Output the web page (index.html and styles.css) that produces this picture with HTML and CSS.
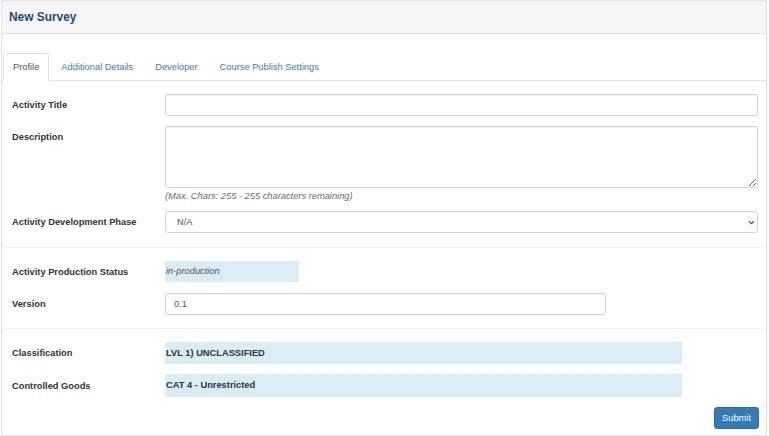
FILE: index.html
```html
<!DOCTYPE html>
<html>
<head>
<meta charset="utf-8">
<title>New Survey</title>
<link rel="stylesheet" href="styles.css">
</head>
<body>
<div class="panel">
  <div class="panel-heading"><h3 class="panel-title">New Survey</h3></div>
  <div class="panel-body">
    <ul class="tabs">
      <li class="tab active">Profile</li>
      <li class="tab">Additional Details</li>
      <li class="tab">Developer</li>
      <li class="tab">Course Publish Settings</li>
    </ul>
    <form class="form">
      <div class="row">
        <label class="label">Activity Title</label>
        <div class="ctl"><input class="input" type="text"></div>
      </div>
      <div class="row row-desc">
        <label class="label label-top">Description</label>
        <div class="ctl">
          <textarea class="input textarea"></textarea>
          <div class="help">(Max. Chars: 255 - 255 characters remaining)</div>
        </div>
      </div>
      <div class="row">
        <label class="label">Activity Development Phase</label>
        <div class="ctl">
          <div class="select-wrap">
            <select class="input select"><option>N/A</option></select>
            <svg class="chev" width="7" height="5" viewBox="0 0 7 5"><path d="M1 1.2 L3.5 3.6 L6 1.2" fill="none" stroke="#555" stroke-width="1.2"/></svg>
          </div>
        </div>
      </div>
      <div class="sep"></div>
      <div class="row row-status">
        <label class="label">Activity Production Status</label>
        <div class="ctl"><div class="static static-status">in-production</div></div>
      </div>
      <div class="row">
        <label class="label">Version</label>
        <div class="ctl"><input class="input input-version" type="text" value="0.1"></div>
      </div>
      <div class="sep sep2"></div>
      <div class="row">
        <label class="label">Classification</label>
        <div class="ctl"><div class="static static-bold">LVL 1) UNCLASSIFIED</div></div>
      </div>
      <div class="row">
        <label class="label">Controlled Goods</label>
        <div class="ctl"><div class="static static-bold static-tall">CAT 4 - Unrestricted</div></div>
      </div>
      <div class="actions"><button class="btn" type="button">Submit</button></div>
    </form>
  </div>
</div>
</body>
</html>
```

FILE: styles.css
```css
* { box-sizing: border-box; }
html, body { margin: 0; padding: 0; background: #fff; }
body {
  font-family: "Liberation Sans", Arial, sans-serif;
  font-size: 9.3px;
  color: #333;
}
.panel {
  margin-left: 1px;
  width: 766px;
  height: 436px;
  border: 1px solid #e3e3e3;
  border-right-color: #dcdcdc;
}
.panel-heading {
  height: 33px;
  background: #f6f6f6;
  border-bottom: 1px solid #e3e3e3;
  display: flex;
  align-items: center;
  padding-left: 7px;
}
.panel-title {
  margin: 0;
  font-size: 11.9px;
  font-weight: bold;
  color: #1b4a7a;
}
.panel-body {
  padding-top: 19px;
}
.tabs {
  list-style: none;
  margin: 0;
  padding: 0 0 0 1px;
  display: flex;
  border-bottom: 1px solid #e3e3e3;
  height: 28px;
}
.tab {
  height: 28px;
  padding: 0 9px;
  margin-right: 2px;
  display: flex;
  align-items: center;
  color: #3a7bb5;
  border: 1px solid transparent;
  border-radius: 3px 3px 0 0;
}
.tab.active {
  color: #555;
  background: #fff;
  border-color: #e3e3e3;
  border-bottom-color: #fff;
}
.form {
  padding: 13px 7px 0 10px;
}
.row {
  display: flex;
  align-items: center;
  margin-bottom: 10px;
}
.row-desc { align-items: flex-start; margin-bottom: 0; }
.row-status { margin-bottom: 11px; }
.label {
  width: 153px;
  flex: none;
  font-weight: bold;
  color: #333;
}
.label-top { padding-top: 6px; }
.ctl { flex: 1; }
.input {
  display: block;
  width: 593px;
  height: 22px;
  margin: 0;
  border: 1px solid #d3d3d3;
  border-radius: 3px;
  font-family: "Liberation Sans", Arial, sans-serif;
  font-size: 9.3px;
  color: #555;
  padding: 0 8px;
  background: #fff;
  box-shadow: inset 0 1px 1px rgba(0,0,0,0.04);
}
.textarea {
  height: 62px;
  resize: vertical;
}
.select-wrap {
  position: relative;
  width: 593px;
}
.select {
  -webkit-appearance: none;
  appearance: none;
  padding-left: 11px;
}
.chev {
  position: absolute;
  right: 3px;
  top: 9px;
}
.input-version { width: 441px; }
.help {
  margin: 2px 0 8px 0;
  height: 13px;
  line-height: 13px;
  font-style: italic;
  color: #5d6d7e;
}
.sep {
  height: 1px;
  background: #f0f0f0;
  margin: 14px -7px 13px -10px;
}
.sep2 { margin-top: 13px; }
.static {
  height: 22px;
  line-height: 22px;
  background: #d9edf7;
  padding-left: 1px;
  width: 517px;
}
.static-tall { height: 23px; line-height: 23px; }
.static-status {
  width: 134px;
  font-style: italic;
  color: #555;
  height: 21px;
  line-height: 21px;
}
.static-bold {
  font-weight: bold;
  color: #333;
}
.actions {
  display: flex;
  justify-content: flex-end;
}
.btn {
  width: 45px;
  height: 22px;
  margin: 0;
  background: #337ab7;
  border: 1px solid #2e6da4;
  border-radius: 3px;
  color: #fff;
  font-family: "Liberation Sans", Arial, sans-serif;
  font-size: 9.3px;
  padding: 0;
}
```
